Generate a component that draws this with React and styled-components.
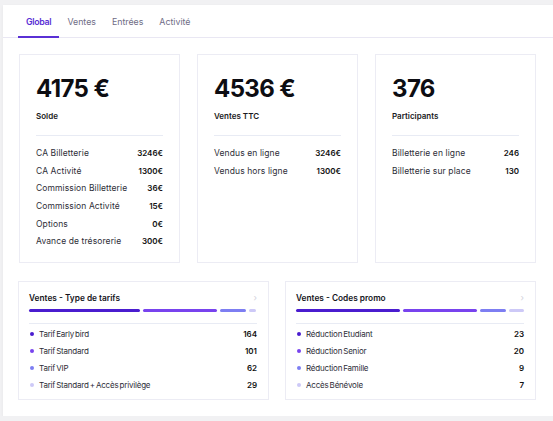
import styled, { createGlobalStyle } from "styled-components";

const GlobalStyle = createGlobalStyle`
    body {
        margin: 0;
        background: #f1f1f3;
        font-family: Inter, "Liberation Sans", sans-serif;
        overflow: hidden;
    }
`;

const Panel = styled.div`
    background: #fff;
    margin: 5px 0 0 3px;
    width: 560px;
    height: 411px;
    box-shadow: 0 1px 3px rgba(0, 0, 0, 0.05);
`;

const TabBar = styled.div`
    display: flex;
    height: 32px;
    padding-left: 15px;
    border-bottom: 1px solid #e9e7f3;
`;

const Tab = styled.div`
    display: flex;
    align-items: center;
    padding: 2px 8px 0;
    font-size: 8.8px;
    font-weight: ${(p) => (p.$active ? 600 : 400)};
    letter-spacing: ${(p) => (p.$active ? "-0.3px" : "0")};
    color: ${(p) => (p.$active ? "#5a30d5" : "#6f6d86")};
    border-bottom: 2px solid ${(p) => (p.$active ? "#5a30d5" : "transparent")};
    margin-bottom: -1px;
`;

const Content = styled.div`
    width: 517px;
    padding: 16px 0 0 16px;
    display: flex;
    flex-direction: column;
    gap: 18px;
`;

const TopRow = styled.div`
    display: grid;
    grid-template-columns: repeat(3, 1fr);
    gap: 17px;
`;

const Card = styled.div`
    border: 1px solid #ececf4;
    box-sizing: border-box;
    height: ${(p) => p.$height}px;
    padding: ${(p) => p.$padding};
`;

const BigNumber = styled.div`
    font-size: 24px;
    font-weight: 700;
    color: #0d0d12;
    letter-spacing: -0.6px;
    line-height: 30px;
    margin-top: 19px;
`;

const Label = styled.div`
    font-size: 8px;
    font-weight: 600;
    color: #1a1a22;
    margin-top: 7px;
`;

const Divider = styled.div`
    height: 1px;
    background: #e8ebf4;
    margin: ${(p) => p.$margin};
`;

const Rows = styled.div`
    display: flex;
    flex-direction: column;
`;

const Row = styled.div`
    display: flex;
    align-items: center;
    justify-content: space-between;
    height: ${(p) => p.$h}px;
    font-size: ${(p) => p.$size}px;
    color: #2e2e38;
    letter-spacing: ${(p) => p.$spacing}px;
    b {
        font-weight: 600;
        color: #111;
        letter-spacing: 0;
        font-size: 8px;
    }
`;

const BottomRow = styled.div`
    display: grid;
    grid-template-columns: 1fr 1fr;
    gap: 16px;
    margin-left: -1px;
`;

const CardHeader = styled.div`
    display: flex;
    align-items: center;
    justify-content: space-between;
    font-size: 8.3px;
    font-weight: 600;
    color: #15151c;
    span:last-child {
        color: #d2d2dc;
        font-weight: 400;
        font-size: 9px;
    }
`;

const Bars = styled.div`
    display: flex;
    gap: 3px;
    margin-top: 6px;
`;

const Bar = styled.div`
    height: 3px;
    border-radius: 2px;
    background: ${(p) => p.$color};
`;

const Item = styled.div`
    display: flex;
    align-items: center;
    gap: 5px;
    word-spacing: -1px;
`;

const Dot = styled.span`
    width: 4px;
    height: 4px;
    border-radius: 50%;
    background: ${(p) => p.$color};
    margin-left: 1px;
`;

const colors = ["#4a1ccf", "#7843ee", "#7d7ef2", "#cdc9f7"];

const summary = [
    {
        value: "4175 €",
        label: "Solde",
        rows: [
            ["CA Billetterie", "3246€"],
            ["CA Activité", "1300€"],
            ["Commission Billetterie", "36€"],
            ["Commission Activité", "15€"],
            ["Options", "0€"],
            ["Avance de trésorerie", "300€"],
        ],
    },
    {
        value: "4536 €",
        label: "Ventes TTC",
        rows: [
            ["Vendus en ligne", "3246€"],
            ["Vendus hors ligne", "1300€"],
        ],
    },
    {
        value: "376",
        label: "Participants",
        rows: [
            ["Billetterie en ligne", "246"],
            ["Billetterie sur place", "130"],
        ],
    },
];

const breakdowns = [
    {
        title: "Ventes - Type de tarifs",
        bars: [111, 74, 26, 7],
        rows: [
            ["Tarif Early bird", 164],
            ["Tarif Standard", 101],
            ["Tarif VIP", 62],
            ["Tarif Standard + Accès privilège", 29],
        ],
    },
    {
        title: "Ventes - Codes promo",
        bars: [104, 74, 26, 15],
        rows: [
            ["Réduction Etudiant", 23],
            ["Réduction Senior", 20],
            ["Réduction Famille", 9],
            ["Accès Bénévole", 7],
        ],
    },
];

const App = () => {
    return (
        <>
            <GlobalStyle />
            <Panel>
                <TabBar>
                    <Tab $active>Global</Tab>
                    <Tab>Ventes</Tab>
                    <Tab>Entrées</Tab>
                    <Tab>Activité</Tab>
                </TabBar>
                <Content>
                    <TopRow>
                        {summary.map((card) => (
                            <Card key={card.label} $height={209} $padding="0 16px">
                                <BigNumber>{card.value}</BigNumber>
                                <Label>{card.label}</Label>
                                <Divider $margin="14px 0 8px" />
                                <Rows>
                                    {card.rows.map(([name, val]) => (
                                        <Row key={name} $h={17.7} $size={8.5} $spacing={0.1}>
                                            <span>{name}</span>
                                            <b>{val}</b>
                                        </Row>
                                    ))}
                                </Rows>
                            </Card>
                        ))}
                    </TopRow>
                    <BottomRow>
                        {breakdowns.map((card) => (
                            <Card key={card.title} $height={119} $padding="10px 11px 0 10px">
                                <CardHeader>
                                    <span>{card.title}</span>
                                    <span>›</span>
                                </CardHeader>
                                <Bars>
                                    {card.bars.map((w, i) => (
                                        <Bar key={i} $color={colors[i]} style={{ width: w }} />
                                    ))}
                                </Bars>
                                <Divider $margin="11px 0 1px" />
                                <Rows>
                                    {card.rows.map(([name, val], i) => (
                                        <Row key={name} $h={17} $size={8} $spacing={-0.2}>
                                            <Item>
                                                <Dot $color={colors[i]} />
                                                <span>{name}</span>
                                            </Item>
                                            <b>{val}</b>
                                        </Row>
                                    ))}
                                </Rows>
                            </Card>
                        ))}
                    </BottomRow>
                </Content>
            </Panel>
        </>
    );
};

export default App;
